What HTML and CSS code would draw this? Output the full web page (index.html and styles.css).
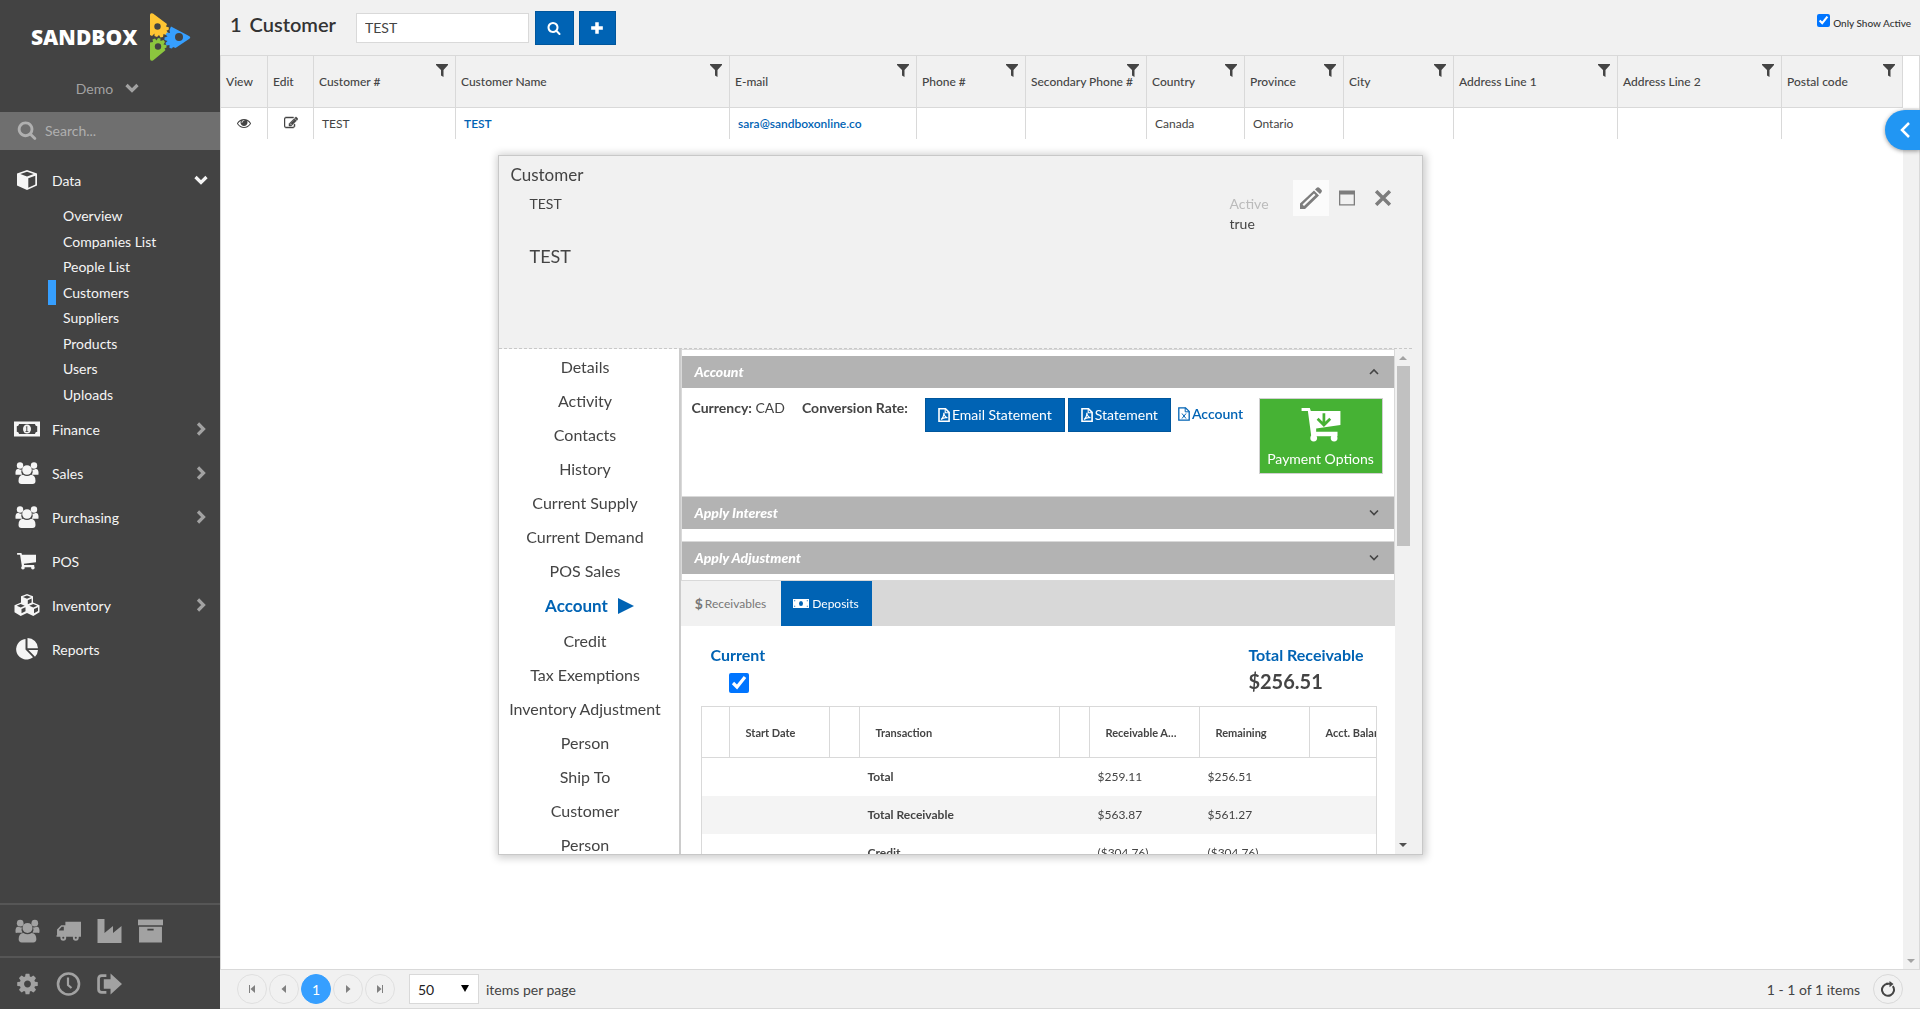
FILE: index.html
```html
<!DOCTYPE html>
<html lang="en">
<head>
<meta charset="utf-8">
<title>Sandbox - Customers</title>
<link rel="stylesheet" href="styles.css">
</head>
<body>
<svg class="sprite" aria-hidden="true">
  <symbol id="i-search" viewBox="0 0 1792 1792"><path d="M1216 832q0-185-131.500-316.500t-316.500-131.500-316.500 131.500-131.500 316.500 131.500 316.500 316.500 131.500 316.500-131.500 131.500-316.500zm512 832q0 52-38 90t-90 38q-54 0-90-38l-343-342q-179 124-399 124-143 0-273.500-55.500t-225-150-150-225-55.500-273.500 55.500-273.500 150-225 225-150 273.500-55.500 273.500 55.500 225 150 150 225 55.500 273.500q0 220-124 399l343 343q37 37 37 90z"/></symbol>
  <symbol id="i-plus" viewBox="0 0 12 12"><path d="M4.500 1h3v3.500H11v3H7.500V11h-3V7.500H1v-3h3.500z"/></symbol>
  <symbol id="i-edit" viewBox="0 0 1792 1792"><path stroke="currentColor" stroke-width="60" d="M888 1184l116-116-152-152-116 116v56h96v96h56zm440-720q-16-16-33 1l-350 350q-17 17-1 33t33-1l350-350q17-17 1-33zm80 594v190q0 119-84.500 203.500t-203.500 84.500h-832q-119 0-203.500-84.500t-84.500-203.500v-832q0-119 84.500-203.500t203.500-84.500h832q63 0 117 25 15 7 18 23 3 17-9 29l-49 49q-14 14-32 8-23-6-45-6h-832q-66 0-113 47t-47 113v832q0 66 47 113t113 47h832q66 0 113-47t47-113v-126q0-13 9-22l64-64q15-15 35-7t20 29zm-96-738l288 288-672 672h-288v-288zm444 132l-92 92-288-288 92-92q28-28 68-28t68 28l152 152q28 28 28 68t-28 68z"/></symbol>
  <symbol id="i-eye" viewBox="0 0 1792 1792"><path d="M1664 960q-152-236-381-353 61 104 61 225 0 185-131.500 316.500t-316.500 131.500-316.500-131.500-131.500-316.500q0-121 61-225-229 117-381 353 133 205 333.500 326.500t434.500 121.500 434.500-121.500 333.500-326.500zm-720-384q0-20-14-34t-34-14q-125 0-214.500 89.500t-89.500 214.500q0 20 14 34t34 14 34-14 14-34q0-86 61-147t147-61q20 0 34-14t14-34zm848 384q0 34-20 69-140 230-376.500 368.500t-499.500 138.500-499.500-139-376.500-368q-20-35-20-69t20-69q140-229 376.500-368t499.500-139 499.500 139 376.500 368q20 35 20 69z"/></symbol>
  <symbol id="i-gear" viewBox="0 0 1792 1792"><path d="M1152 896q0-106-75-181t-181-75-181 75-75 181 75 181 181 75 181-75 75-181zm512-109v222q0 12-8 23t-20 13l-185 28q-19 54-39 91 35 50 107 138 10 12 10 25t-9 23q-27 37-99 108t-94 71q-12 0-26-9l-138-108q-44 23-91 38-16 136-29 186-7 28-36 28h-222q-14 0-24.500-8.500t-11.500-21.500l-28-184q-49-16-90-37l-141 107q-10 9-25 9-14 0-25-11-126-114-165-168-7-10-7-23 0-12 8-23 15-21 51-66.500t54-70.500q-27-50-41-99l-183-27q-13-2-21-12.500t-8-23.500v-222q0-12 8-23t19-13l186-28q14-46 39-92-40-57-107-138-10-12-10-24 0-10 9-23 26-36 98.500-107.500t94.500-71.500q13 0 26 10l138 107q44-23 91-38 16-136 29-186 7-28 36-28h222q14 0 24.500 8.500t11.500 21.500l28 184q49 16 90 37l142-107q9-9 24-9 13 0 25 10 129 119 165 170 7 8 7 22 0 12-8 23-15 21-51 66.500t-54 70.500q26 50 41 98l183 28q13 2 21 12.500t8 23.500z"/></symbol>
  <symbol id="i-down" viewBox="0 0 14 10"><path d="M1.500 2L7 7.500 12.500 2" fill="none" stroke="currentColor" stroke-width="3.200"/></symbol>
  <symbol id="i-right" viewBox="0 0 10 14"><path d="M2 1.500L7.500 7 2 12.500" fill="none" stroke="currentColor" stroke-width="3.200"/></symbol>
  <symbol id="i-thin-down" viewBox="0 0 12 8"><path d="M2 1.500L6 5.500l4-4" fill="none" stroke="currentColor" stroke-width="1.600"/></symbol>
  <symbol id="i-thin-up" viewBox="0 0 12 8"><path d="M2 6l4-4 4 4" fill="none" stroke="currentColor" stroke-width="1.600"/></symbol>
  <symbol id="i-filter" viewBox="0 0 12 13"><path d="M0 0h12v1L7.500 6v7L5 11.500V6L0 1z"/></symbol>
  <symbol id="i-cube" viewBox="0 0 22 22"><path fill-rule="evenodd" d="M11 1l10 3.500v12L11 21 1 16.500v-12zM11 2.800L4.300 5.100 11 7.600l6.700-2.500zM12.300 9.300v9.400l7-3.200V6.700z"/></symbol>
  <symbol id="i-money" viewBox="0 0 28 18"><path fill-rule="evenodd" d="M0 1h28v16H0zM5.500 3.500Q5 6 3 6v6q2 0 2.500 2.500h17Q23 12 25 12V6q-2 0-2.500-2.500z"/><ellipse cx="14" cy="9" rx="4.300" ry="4.800"/><path d="M12.500 6.800l1.800-1v5.500h1.200v1h-3.200v-1h1V7.200z" fill="#434343"/></symbol>
  <symbol id="i-users" viewBox="0 0 24 22"><circle cx="5" cy="3.500" r="3.200"/><circle cx="19" cy="3.500" r="3.200"/><path d="M.5 12.500q-.5-6 3-5.500 2 1 3.200.5Q5.500 10 7.200 12.700H2Q1 13 .5 12.500zM23.500 12.500q.5-6-3-5.500-2 1-3.200.5 1.200 2.500-.5 5.200H22q1 .3 1.500-.2z"/><circle cx="12" cy="8" r="4.800"/><path d="M3.500 19q0-6 4.500-6.200 4 2.400 8 0 4.500.2 4.500 6.200 0 3-3 3h-11q-3 0-3-3z"/></symbol>
  <symbol id="i-cart" viewBox="0 0 22 20"><path d="M0 1h4.800l.6 2H21v8.500L7.500 13l.3 1.500H19V17H5.500L3.300 3H0z"/><circle cx="6.500" cy="17.500" r="2"/><circle cx="17.500" cy="17.500" r="2"/></symbol>
  <symbol id="i-cubes" viewBox="0 0 26 22"><path fill-rule="evenodd" d="M13 0l6 2.300v6.200l6.500 2.700v7L19.300 22 13 19 6.700 22 .5 18.200v-7L7 8.500V2.300zM13 1.500L9 3.100l4 1.700 4-1.700zM13.800 6.200v4l3.800-1.700V4.600zM6.700 10l-4 1.700 4 1.700 4-1.700zM7.500 15v4.300l4-2V13.300zM19.300 10l-4 1.700 4 1.700 4-1.700zM20 15v4.300l4-2.200v-3.800z"/></symbol>
  <symbol id="i-pie" viewBox="0 0 24 22"><path d="M10.500 1v10.500l7.500 7.700A10.300 10.300 0 1 1 10.500 1z"/><path d="M12.500 0A10.500 10.500 0 0 1 23 10.300H12.500zM13.500 12H23q-.3 4-3 6.700z"/></symbol>
  <symbol id="i-truck" viewBox="0 0 24 20"><path fill-rule="evenodd" d="M9 1h15v14.500h-2.200a3 3 0 0 1-5.600 0H9.800a3 3 0 0 1-5.600 0H.5V14H1V8.500L5 4.500h4zM5.500 6L3 8.700V9.500h4.500V6z"/><circle cx="7" cy="16.500" r="2.800"/><circle cx="19" cy="16.500" r="2.800"/><circle cx="7" cy="16.500" r="1" fill="#434343"/><circle cx="19" cy="16.500" r="1" fill="#434343"/></symbol>
  <symbol id="i-factory" viewBox="0 0 24 24"><path d="M0 0h7v14l8.500-7v7L24 7v17H0z"/></symbol>
  <symbol id="i-box" viewBox="0 0 24 22"><path d="M0 0h24v5.500H0z"/><path fill-rule="evenodd" d="M1 7h22v15H1zM9 8.800v1.800h6V8.800z"/></symbol>
  <symbol id="i-clock" viewBox="0 0 24 24"><circle cx="12" cy="12" r="10.500" fill="none" stroke="currentColor" stroke-width="2.600"/><path d="M11.500 5.500V13l3.500 3" fill="none" stroke="currentColor" stroke-width="2.200"/></symbol>
  <symbol id="i-exit" viewBox="0 0 24 20"><path d="M9 2H4.500Q1.500 2 1.500 5v10q0 3 3 3H9" fill="none" stroke="currentColor" stroke-width="2.600"/><path d="M6.500 5.500H13V0l11 10-11 10v-5.500H6.500z"/></symbol>
  <symbol id="i-pdf" viewBox="0 0 12 14"><path d="M1 .8h6.500l3.600 3.600v8.800H1z" fill="none" stroke="currentColor" stroke-width="1.600"/><path d="M7.200.8v4h4M3 11.500Q6 9 5.800 4.800q.6 4 3.700 5Q6 9 3 11.500z" fill="none" stroke="currentColor" stroke-width="1.100"/></symbol>
  <symbol id="i-xls" viewBox="0 0 12 14"><path d="M.8.800h6.700l3.700 3.600v8.800H.8z" fill="none" stroke="currentColor" stroke-width="1.300"/><path d="M7.200.8v4h4M4 6.500l4 5M8 6.500l-4 5" fill="none" stroke="currentColor" stroke-width="1"/></symbol>
  <symbol id="i-pay" viewBox="0 0 40 35"><path d="M0 0h8.500l1 3H40v14.500L15 21v3.500h22V29H10L6.500 3H0z"/><circle cx="12.500" cy="31" r="3.500"/><circle cx="33.500" cy="31" r="3.500"/><path d="M23 5.500V17M16.500 11L23 17.500l6.500-6.500" fill="none" stroke="#46b234" stroke-width="2.800"/></symbol>
  <symbol id="i-bill" viewBox="0 0 16 9"><path fill-rule="evenodd" d="M0 0h16v9H0zM1.200 1.200v1h1v-1zM13.800 1.200v1h1v-1zM1.200 6.800v1h1v-1zM13.800 6.800v1h1v-1zM8 2Q6 2 6 4.500T8 7q2 0 2-2.500T8 2z"/></symbol>
  <symbol id="i-pencil" viewBox="0 0 22 22"><path fill-rule="evenodd" d="M0 22v-5.500L14 3.500l5 5L5 22zM2.500 17.500l1.500 1.500L15.500 8 14 6.500z"/><path d="M15 2.500L16.500 1q1.500-1.500 3 0l1.800 1.800q1.200 1.200 0 2.700L20 7z"/></symbol>
  <symbol id="i-window" viewBox="0 0 16 15"><path fill-rule="evenodd" d="M0 0h16v15H0zM1.300 4v9.700h13.400V4z"/></symbol>
  <symbol id="i-close" viewBox="0 0 14 14"><path d="M1 1l12 12M13 1L1 13" stroke="currentColor" stroke-width="3"/></symbol>
  <symbol id="i-prev" viewBox="0 0 10 10"><path d="M7 1v8L2.500 5z"/></symbol>
  <symbol id="i-next" viewBox="0 0 10 10"><path d="M3 1v8l4.500-4z"/></symbol>
  <symbol id="i-first" viewBox="0 0 10 10"><path d="M2 1h1v8H2zM8 1v8L3.500 5z"/></symbol>
  <symbol id="i-last" viewBox="0 0 10 10"><path d="M7 1h1v8H7zM2 1v8l4.500-4z"/></symbol>
  <symbol id="i-refresh" viewBox="0 0 16 16"><path d="M12.800 5.200A6 6 0 1 1 8 2.800" fill="none" stroke="currentColor" stroke-width="2"/><path d="M6 1.800h3.500V0l4 3-4 3.200V3.800H6z"/></symbol>
</svg>

<div class="app">
  <aside class="sidebar">
    <div class="logo">
      <span class="logo-text">SANDBOX</span>
      <svg class="logo-mark" viewBox="0 0 42 48" aria-hidden="true">
        <path fill="#ffc533" d="M1 2q0-2.500 3-1.500L18 11l-1 2.500 3 1-.5 2.500-2 .5 1.500 2.500-2 2-2.500-1-.5 3-2.500.5-1.500-2.500-2 2-2.500-1v-2.500L3 23l-2-1z"/>
        <circle cx="8.500" cy="13.500" r="3.200" fill="#434343"/>
        <path fill="#369fff" d="M22 13.500L40 23q2.500 1.500 0 3L26.500 35l-2.500-1-1 1.500-2.500-.5v-3l-3 .5-1-2.500 2-2-3-1v-2.500l3-1-2-2 1.500-2 3 .5-.5-3z"/>
        <circle cx="30" cy="24" r="4" fill="#434343"/>
        <path fill="#8cc63e" d="M1 45.500V29.500l3-.5-.5-2.500 2.500-1 1.500 2 1.500-2.500 2.500.5v2.500l3-1 1.500 2-1.500 2.500 3 .5v2.500l-2 1 1 1.500-1 1L4 47.500q-3 1-3-2z"/>
        <circle cx="9" cy="33.500" r="3.200" fill="#434343"/>
      </svg>
    </div>
    <button class="tenant">Demo <svg class="i-chev"><use href="#i-down"/></svg></button>
    <label class="side-search">
      <svg class="i-20"><use href="#i-search"/></svg>
      <input type="text" placeholder="Search..." aria-label="Search">
    </label>
    <nav class="menu">
      <a href="#" class="menu-row"><svg><use href="#i-cube"/></svg><span>Data</span><svg class="arrow-open"><use href="#i-down"/></svg></a>
      <div class="submenu">
        <a href="#">Overview</a>
        <a href="#">Companies List</a>
        <a href="#">People List</a>
        <a href="#" class="current">Customers</a>
        <a href="#">Suppliers</a>
        <a href="#">Products</a>
        <a href="#">Users</a>
        <a href="#">Uploads</a>
      </div>
      <a href="#" class="menu-row"><svg><use href="#i-money"/></svg><span>Finance</span><svg class="arrow"><use href="#i-right"/></svg></a>
      <a href="#" class="menu-row"><svg><use href="#i-users"/></svg><span>Sales</span><svg class="arrow"><use href="#i-right"/></svg></a>
      <a href="#" class="menu-row"><svg><use href="#i-users"/></svg><span>Purchasing</span><svg class="arrow"><use href="#i-right"/></svg></a>
      <a href="#" class="menu-row"><svg class="small"><use href="#i-cart"/></svg><span>POS</span></a>
      <a href="#" class="menu-row"><svg><use href="#i-cubes"/></svg><span>Inventory</span><svg class="arrow"><use href="#i-right"/></svg></a>
      <a href="#" class="menu-row"><svg><use href="#i-pie"/></svg><span>Reports</span></a>
    </nav>
    <div class="side-icons">
      <button aria-label="Customers"><svg><use href="#i-users"/></svg></button>
      <button aria-label="Suppliers"><svg><use href="#i-truck"/></svg></button>
      <button aria-label="Manufacturing"><svg><use href="#i-factory"/></svg></button>
      <button aria-label="Products"><svg><use href="#i-box"/></svg></button>
    </div>
    <div class="side-icons">
      <button aria-label="Settings"><svg><use href="#i-gear"/></svg></button>
      <button aria-label="Time"><svg><use href="#i-clock"/></svg></button>
      <button aria-label="Sign out"><svg><use href="#i-exit"/></svg></button>
    </div>
  </aside>

  <main class="main">
    <header class="toolbar">
      <h1><span>1</span><span>Customer</span></h1>
      <input class="find" type="text" value="TEST" aria-label="Find customer">
      <button class="btn find-btn" aria-label="Search"><svg class="i-14"><use href="#i-search"/></svg></button>
      <button class="btn add-btn" aria-label="Add"><svg class="i-14"><use href="#i-plus"/></svg></button>
      <label class="only-active"><input type="checkbox" checked><span>Only Show Active</span></label>
    </header>

    <div class="list">
      <div class="list-body">
        <table class="grid">
          <colgroup><col class="w47"><col class="w46"><col class="w142"><col class="w274"><col class="w187"><col class="w109"><col class="w121"><col class="w98"><col class="w99"><col class="w110"><col class="w164"><col class="w164"><col class="w121"></colgroup>
          <thead>
            <tr>
              <th>View</th><th>Edit</th>
              <th>Customer #<svg><use href="#i-filter"/></svg></th>
              <th>Customer Name<svg><use href="#i-filter"/></svg></th>
              <th>E-mail<svg><use href="#i-filter"/></svg></th>
              <th>Phone #<svg><use href="#i-filter"/></svg></th>
              <th>Secondary Phone #<svg><use href="#i-filter"/></svg></th>
              <th>Country<svg><use href="#i-filter"/></svg></th>
              <th>Province<svg><use href="#i-filter"/></svg></th>
              <th>City<svg><use href="#i-filter"/></svg></th>
              <th>Address Line 1<svg><use href="#i-filter"/></svg></th>
              <th>Address Line 2<svg><use href="#i-filter"/></svg></th>
              <th>Postal code<svg><use href="#i-filter"/></svg></th>
            </tr>
          </thead>
          <tbody>
            <tr>
              <td class="icon"><button aria-label="View"><svg class="i-14"><use href="#i-eye"/></svg></button></td>
              <td class="icon"><button aria-label="Edit"><svg class="i-14"><use href="#i-edit"/></svg></button></td>
              <td>TEST</td><td><a href="#">TEST</a></td><td><a href="#">sara@sandboxonline.co</a></td>
              <td></td><td></td><td>Canada</td><td>Ontario</td><td></td><td></td><td></td><td></td>
            </tr>
          </tbody>
        </table>
      </div>
      <div class="list-scroll"><span class="tri-down light"></span></div>
      <button class="drawer" aria-label="Open panel"><svg viewBox="0 0 12 18"><path d="M10 2L3 9l7 7" fill="none" stroke="#fff" stroke-width="2.500"/></svg></button>
    </div>

    <footer class="pager">
      <button class="round" aria-label="First page"><svg><use href="#i-first"/></svg></button>
      <button class="round" aria-label="Previous page"><svg><use href="#i-prev"/></svg></button>
      <button class="round on">1</button>
      <button class="round" aria-label="Next page"><svg><use href="#i-next"/></svg></button>
      <button class="round" aria-label="Last page"><svg><use href="#i-last"/></svg></button>
      <span class="size-wrap"><select id="size"><option>50</option></select></span>
      <label for="size">items per page</label>
      <span class="count">1 - 1 of 1 items</span>
      <button class="round refresh" aria-label="Refresh"><svg><use href="#i-refresh"/></svg></button>
    </footer>
  </main>
</div>

<div class="overlay">
  <section class="dialog" role="dialog" aria-label="Customer">
    <header class="dialog-head">
      <div class="dialog-title">
        <h2>Customer</h2>
        <p class="code">TEST</p>
        <p class="name">TEST</p>
      </div>
      <dl class="status"><dt>Active</dt><dd>true</dd></dl>
      <div class="tools">
        <button class="hot" aria-label="Edit"><svg class="i-22"><use href="#i-pencil"/></svg></button>
        <button aria-label="Maximize"><svg class="i-16"><use href="#i-window"/></svg></button>
        <button aria-label="Close"><svg class="i-16"><use href="#i-close"/></svg></button>
      </div>
    </header>
    <div class="dialog-body">
      <nav class="tabs-nav">
        <a href="#">Details</a><a href="#">Activity</a><a href="#">Contacts</a><a href="#">History</a>
        <a href="#">Current Supply</a><a href="#">Current Demand</a><a href="#">POS Sales</a>
        <a href="#" class="current">Account</a>
        <a href="#">Credit</a><a href="#">Tax Exemptions</a><a href="#">Inventory Adjustment</a>
        <a href="#">Person</a><a href="#">Ship To</a><a href="#">Customer</a><a href="#">Person</a>
      </nav>
      <div class="content">
        <div class="panel first">
          <button class="bar">Account<svg><use href="#i-thin-up"/></svg></button>
          <div class="account">
            <span><b>Currency:</b> CAD</span>
            <b class="rate">Conversion Rate:</b>
            <button class="btn pdf"><svg><use href="#i-pdf"/></svg>Email Statement</button>
            <button class="btn pdf"><svg><use href="#i-pdf"/></svg>Statement</button>
            <a href="#" class="export"><svg><use href="#i-xls"/></svg>Account</a>
            <button class="pay"><svg><use href="#i-pay"/></svg>Payment Options</button>
          </div>
        </div>
        <div class="panel gap"><button class="bar">Apply Interest<svg><use href="#i-thin-down"/></svg></button></div>
        <div class="panel gap-small"><button class="bar">Apply Adjustment<svg><use href="#i-thin-down"/></svg></button></div>
        <div class="subtabs">
          <button class="rec"><b>$</b> Receivables</button>
          <button class="dep"><svg><use href="#i-bill"/></svg>Deposits</button>
        </div>
        <div class="summary">
          <label class="current-only">Current<input type="checkbox" checked></label>
          <div class="total"><h3>Total Receivable</h3><p>$256.51</p></div>
        </div>
        <div class="ledger-wrap">
          <table class="ledger">
            <colgroup><col class="w27"><col class="w100"><col class="w30"><col class="w200"><col class="w30"><col class="w110"><col class="w110"><col class="w110"></colgroup>
            <thead><tr><th></th><th>Start Date</th><th></th><th>Transaction</th><th></th><th>Receivable Amount</th><th>Remaining</th><th>Acct. Balance</th></tr></thead>
            <tbody>
              <tr><td></td><td></td><td></td><td><b>Total</b></td><td></td><td>$259.11</td><td>$256.51</td><td></td></tr>
              <tr><td></td><td></td><td></td><td><b>Total Receivable</b></td><td></td><td>$563.87</td><td>$561.27</td><td></td></tr>
              <tr><td></td><td></td><td></td><td><b>Credit</b></td><td></td><td>($304.76)</td><td>($304.76)</td><td></td></tr>
            </tbody>
          </table>
        </div>
      </div>
      <div class="dialog-scroll"><span class="tri-up"></span><span class="thumb"></span><span class="tri-down"></span></div>
    </div>
  </section>
</div>
</body>
</html>
```
FILE: styles.css
```css
* { box-sizing: border-box; }
html, body { height: 100%; margin: 0; }
body { font-family: Lato, "Liberation Sans", sans-serif; font-size: 14px; color: #444; background: #fff; overflow: hidden; }
button, input, select { font: inherit; color: inherit; margin: 0; }
button { border: 0; padding: 0; background: none; display: flex; align-items: center; justify-content: center; }
a { color: inherit; text-decoration: none; }
h1, h2, h3, p, dl, dd { margin: 0; font-weight: 400; }
svg { fill: currentColor; flex: none; display: block; }
.sprite { display: none; }
.i-14 { width: 14px; height: 14px; }
.i-16 { width: 16px; height: 16px; }
.i-20 { width: 20px; height: 20px; }
.i-22 { width: 22px; height: 22px; }

.app { display: flex; height: 100vh; }

/* Sidebar */
.sidebar { width: 220px; flex: none; background: #434343; color: #f5f5f5; display: flex; flex-direction: column; }
.logo { display: flex; align-items: center; gap: 12px; height: 64px; padding: 13px 0 3px 31px; }
.logo-text { font: 800 21px/24px "Open Sans", sans-serif; color: #fff; }
.logo-mark { width: 42px; height: 48px; }
.tenant { height: 48px; padding-right: 5px; gap: 12px; color: #a2a2a2; }
.i-chev { width: 14px; height: 10px; }
.side-search { display: flex; align-items: center; gap: 8px; height: 38px; padding: 0 17px 2px; background: #6f6f6f; color: #b0b0b0; }
.side-search input { width: 140px; border: 0; padding: 0; background: none; outline: 0; }
.side-search input::placeholder { color: #b0b0b0; opacity: 1; }
.menu { flex: 1; padding-top: 8px; }
.menu-row { display: flex; align-items: center; height: 44px; padding: 0 12px 0 14px; }
.menu-row > svg { width: 26px; height: 22px; }
.menu-row > svg.small { height: 18px; }
.menu-row span { flex: 1; padding-left: 12px; }
.menu-row .arrow { width: 14px; height: 14px; color: #a2a2a2; }
.menu-row .arrow-open { width: 14px; height: 10px; }
.submenu { display: grid; grid-auto-rows: 1fr; height: 205px; padding-top: 1px; }
.submenu a { display: flex; align-items: center; margin-left: 48px; padding-left: 7px; border-left: 8px solid transparent; }
.submenu .current { border-left-color: #369fff; }
.side-icons { display: flex; align-items: center; gap: 16px; height: 53px; padding-left: 15px; border-top: 2px solid #565656; color: #a2a2a2; }
.side-icons svg { width: 25px; height: 24px; }

/* Toolbar */
.main { flex: 1; min-width: 0; display: flex; flex-direction: column; }
.toolbar { display: flex; align-items: center; height: 56px; padding: 0 9px 0 10px; background: #f1f1f1; border-bottom: 1px solid #d9d9d9; }
.toolbar h1 { display: flex; gap: 8px; font-size: 20px; line-height: 24px; font-weight: 600; color: #333; padding-bottom: 8px; margin-right: 20px; }
.find { width: 173px; height: 30px; padding: 0 8px; border: 1px solid #d9d9d9; background: #fff; margin-right: 6px; }
.btn { height: 34px; border: 1px solid #00569c; background: #0063b4; color: #fff; }
.find-btn { width: 39px; margin-right: 5px; }
.add-btn { width: 37px; }
.only-active { margin-left: auto; display: flex; align-items: center; gap: 3px; font-size: 10px; font-weight: 500; color: #333; padding-bottom: 14px; }
.only-active input { width: 13px; height: 13px; }
.only-active span { padding-top: 4px; }

/* Customer list */
.list { flex: 1; display: flex; min-height: 0; position: relative; border-left: 1px solid #d9d9d9; border-right: 1px solid #d9d9d9; }
.list-body { flex: 1; min-width: 0; }
.grid { width: 100%; table-layout: fixed; border-collapse: separate; border-spacing: 0; font-size: 12px; }
.grid th { position: relative; height: 52px; padding: 0 0 0 5px; text-align: left; font-weight: 500; white-space: nowrap; background: #f1f1f1; border-bottom: 1px solid #d9d9d9; border-right: 1px solid #d9d9d9; }
.grid th svg { position: absolute; top: 8px; right: 7px; width: 12px; height: 13px; }
.grid td { height: 31px; padding: 0 0 0 8px; border-right: 1px solid #d9d9d9; }
.grid td:last-child { border-right: 0; }
.grid td.icon { padding: 0; }
.grid td.icon button { width: 100%; padding-bottom: 1px; }
.grid td a { color: #0063b4; font-weight: 600; }
.w47 { width: 47px; } .w46 { width: 46px; } .w142 { width: 142px; } .w274 { width: 274px; } .w187 { width: 187px; }
.w109 { width: 109px; } .w121 { width: 121px; } .w98 { width: 98px; } .w99 { width: 99px; } .w110 { width: 110px; } .w164 { width: 164px; }
.list-scroll { width: 16px; margin-top: 52px; background: #f1f1f1; display: flex; justify-content: center; align-items: flex-end; padding-bottom: 6px; }
.tri-down, .tri-up { width: 0; height: 0; border: 4px solid transparent; }
.tri-down { border-top-color: #505050; border-bottom: 0; }
.tri-down.light { border-top-color: #a3a3a3; }
.tri-up { border-bottom-color: #a3a3a3; border-top: 0; }
.drawer { position: absolute; top: 54px; right: -1px; width: 35px; height: 40px; border-radius: 20px 0 0 20px; background: #2196f3; box-shadow: 0 1px 4px rgba(0,0,0,.4); padding-left: 4px; }
.drawer svg { width: 12px; height: 18px; }

/* Pager */
.pager { display: flex; align-items: center; gap: 2px; height: 40px; padding: 0 17px; background: #f1f1f1; border-top: 1px solid #d9d9d9; border-bottom: 1px solid #d9d9d9; }
.round { width: 30px; height: 30px; border: 1px solid #e0e0e0; border-radius: 50%; color: #808080; }
.round svg { width: 10px; height: 10px; }
.round.on { background: #369fff; border-color: #369fff; color: #fff; }
.size-wrap { position: relative; margin: 0 5px 0 12px; }
.size-wrap::after { content: ""; position: absolute; right: 10px; top: 11px; border: 4px solid transparent; border-top: 7px solid #000; border-bottom: 0; pointer-events: none; }
.size-wrap select { appearance: none; display: block; width: 70px; height: 30px; padding: 0 8px; border: 1px solid #d9d9d9; border-radius: 0; background: #fff; color: #222; }
.count { margin-left: auto; margin-right: 11px; }
.round.refresh { color: #444; border-color: #d9d9d9; }
.round.refresh svg { width: 16px; height: 16px; }

/* Customer dialog */
.overlay { position: fixed; inset: 0; display: grid; place-items: center; pointer-events: none; }
.dialog { width: 925px; height: 700px; padding-right: 10px; display: flex; flex-direction: column; background: #f1f1f1; border: 1px solid #c8c8c8; box-shadow: 1px 1px 8px 2px rgba(0,0,0,.2); pointer-events: auto; }
.dialog-head { display: flex; align-items: flex-start; height: 193px; flex: none; border-bottom: 1px dashed #c8c8c8; }
.dialog-title { flex: 1; padding: 8px 0 0 12px; }
.dialog-title h2 { font-size: 17px; line-height: 22px; }
.dialog-title p { padding-left: 19px; }
.code { line-height: 20px; margin-top: 8px; }
.name { font-size: 18px; line-height: 24px; margin-top: 30px; }
.status { width: 63px; padding-top: 38px; line-height: 20px; }
.status dt { color: #bbb; }
.tools { display: flex; padding-top: 24px; margin-right: 11px; color: #7d7d7d; }
.tools button { width: 36px; height: 36px; }
.tools .hot { background: #fbfbfb; }
.dialog-body { flex: 1; min-height: 0; display: flex; }
.tabs-nav { width: 182px; flex: none; background: #fff; border-right: 2px solid #ccc; font-size: 16px; overflow: hidden; padding-top: 1px; }
.tabs-nav a { display: flex; align-items: center; justify-content: center; height: 34px; padding-right: 7px; white-space: nowrap; }
.tabs-nav .current { height: 36px; padding: 0 0 0 2px; gap: 10px; font-size: 17px; font-weight: 700; color: #0063b4; }
.tabs-nav .current::after { content: ""; border: 8px solid transparent; border-left: 16px solid #0063b4; border-right: 0; }
.content { flex: 1; min-width: 0; background: #fff; overflow: hidden; }
.panel { border: 1px solid #d9d9d9; border-bottom: 0; }
.panel.first { padding-top: 6px; }
.gap { padding-bottom: 12px; }
.gap-small { padding-bottom: 6px; }
.bar { width: 100%; height: 32px; padding: 0 14px 0 13px; justify-content: space-between; background: #b3b3b3; color: #fff; font-weight: 900; font-style: italic; }
.bar svg { width: 12px; height: 8px; color: #444; }
.account { display: flex; align-items: flex-start; height: 108px; padding: 10px 11px 0 10px; line-height: 20px; white-space: nowrap; }
.account b { font-weight: 700; }
.rate { margin: 0 17px; }
.account .btn { padding: 0 12px; margin-right: 3px; }
.pdf svg, .export svg { width: 12px; height: 14px; margin-right: 2px; }
.export { display: flex; align-items: center; color: #0063b4; font-weight: 600; margin: 6px 0 0 4px; }
.pay { width: 124px; height: 76px; margin-left: auto; flex-direction: column; gap: 7px; padding-top: 5px; background: #46b234; border: 1px solid #d0d0d0; color: #fff; }
.pay svg { width: 40px; height: 34px; }
.subtabs { display: flex; height: 46px; background: #d8d8d8; border-top: 1px solid #d9d9d9; font-size: 12px; }
.rec { width: 100px; gap: 2px; background: #f1f1f1; color: #777; }
.rec b { font-size: 14px; }
.dep { width: 91px; gap: 3px; background: #0063b4; color: #fff; }
.dep svg { width: 16px; height: 9px; }
.summary { display: flex; justify-content: space-between; padding: 19px 31px 0 30px; height: 80px; }
.current-only { font-size: 16px; line-height: 20px; font-weight: 700; color: #0063b4; }
.current-only input { display: block; width: 20px; height: 20px; margin: 8px 0 0 18px; }
.total h3 { font-size: 16px; line-height: 20px; font-weight: 700; color: #0063b4; }
.total p { font-size: 20px; line-height: 32px; font-weight: 700; }
.ledger-wrap { margin: 0 18px 0 20px; border: 1px solid #d9d9d9; overflow: hidden; }
.ledger { width: 717px; table-layout: fixed; border-collapse: separate; border-spacing: 0; font-size: 12px; text-align: left; }
.ledger th { height: 51px; padding: 2px 16px 0; border-bottom: 1px solid #d9d9d9; border-left: 1px solid #d9d9d9; font-size: 11px; font-weight: 700; white-space: nowrap; overflow: hidden; text-overflow: ellipsis; }
.ledger th:first-child { border-left: 0; }
.ledger td { height: 38px; padding: 0 0 0 9px; }
.ledger b { font-weight: 700; }
.ledger tbody tr:nth-child(even) { background: #f4f4f4; }
.w27 { width: 27px; } .w30 { width: 30px; } .w100 { width: 100px; } .w200 { width: 200px; }
.dialog-scroll { width: 17px; display: flex; flex-direction: column; align-items: center; padding: 7px 0; background: #f1f1f1; }
.dialog-scroll .thumb { width: 13px; height: 180px; margin: 6px 0 auto; background: #c1c1c1; }
```
